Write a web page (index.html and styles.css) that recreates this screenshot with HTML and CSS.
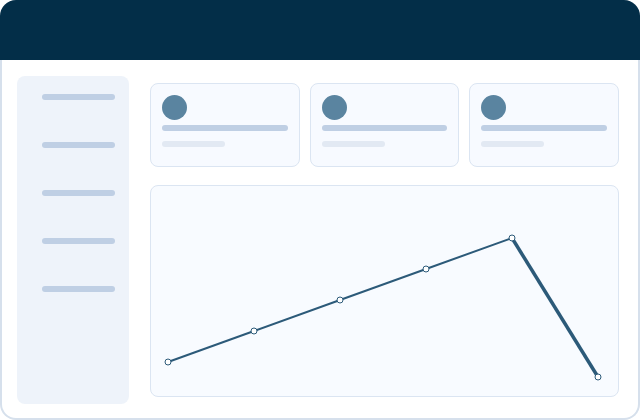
FILE: index.html
```html
<!DOCTYPE html>
<html lang="en">
<head>
  <meta charset="UTF-8" />
  <title>Dashboard</title>
  <link rel="stylesheet" href="styles.css">
</head>
<body>

<div class="frame">
  <div class="topbar"></div>

  <div class="main">
    <div class="sidebar">
      <div class="nav-item"></div>
      <div class="nav-item"></div>
      <div class="nav-item"></div>
      <div class="nav-item"></div>
      <div class="nav-item"></div>
    </div>

    <div class="content">
      <div class="cards">
        <div class="card">
          <div class="avatar"></div>
          <div class="line"></div>
          <div class="line short"></div>
        </div>
        <div class="card">
          <div class="avatar"></div>
          <div class="line"></div>
          <div class="line short"></div>
        </div>
        <div class="card">
          <div class="avatar"></div>
          <div class="line"></div>
          <div class="line short"></div>
        </div>
      </div>

      <div class="chart">
        <svg width="469" height="212" viewBox="0 0 469 212">
          <polyline points="18,177 104,146 190,115 276,84 362,53" fill="none" stroke="#2c5a79" stroke-width="2" />
          <line x1="362" y1="53" x2="448" y2="192" stroke="#2c5a79" stroke-width="3.5" />
          <g fill="#fff" stroke="#2c5a79" stroke-width="1">
            <circle cx="18" cy="177" r="3" />
            <circle cx="104" cy="146" r="3" />
            <circle cx="190" cy="115" r="3" />
            <circle cx="276" cy="84" r="3" />
            <circle cx="362" cy="53" r="3" />
            <circle cx="448" cy="192" r="3" />
          </g>
        </svg>
      </div>
    </div>
  </div>
</div>

</body>
</html>
```

FILE: styles.css
```css
body {
  margin: 0;
  padding: 0;
  background: #fff;
  font-family: 'Liberation Sans', sans-serif;
}

.frame {
  width: 640px;
  height: 420px;
  display: flex;
  flex-direction: column;
}

.topbar {
  height: 60px;
  background: #032e48;
  border-radius: 16px 16px 0 0;
}

.main {
  flex: 1;
  box-sizing: border-box;
  border: 2px solid #d6e0ec;
  border-top: none;
  border-radius: 0 0 16px 16px;
  padding: 16px 19px 14px 15px;
  display: grid;
  grid-template-columns: 112px 1fr;
  gap: 21px;
}

.sidebar {
  background: #eef3fa;
  border-radius: 8px;
  padding: 18px 14px 0 25px;
  display: flex;
  flex-direction: column;
  gap: 42px;
}

.nav-item {
  height: 6px;
  border-radius: 3px;
  background: #bfcfe4;
}

.content {
  padding: 7px 0;
  display: flex;
  flex-direction: column;
  gap: 18px;
}

.cards {
  display: grid;
  grid-template-columns: repeat(3, 1fr);
  gap: 10px;
}

.card {
  height: 84px;
  box-sizing: border-box;
  background: #f7faff;
  border: 1px solid #dbe5f2;
  border-radius: 8px;
  padding: 11px;
}

.avatar {
  width: 25px;
  height: 25px;
  border-radius: 50%;
  background: #5a84a0;
}

.line {
  height: 6px;
  border-radius: 3px;
  background: #bfcfe4;
  margin-top: 5px;
}

.line.short {
  width: 63px;
  background: #e2e9f3;
  margin-top: 10px;
}

.chart {
  flex: 1;
  box-sizing: border-box;
  background: #f8fbff;
  border: 1px solid #dbe5f2;
  border-radius: 8px;
  overflow: hidden;
}

.chart svg {
  display: block;
  margin: -1px;
}
```
